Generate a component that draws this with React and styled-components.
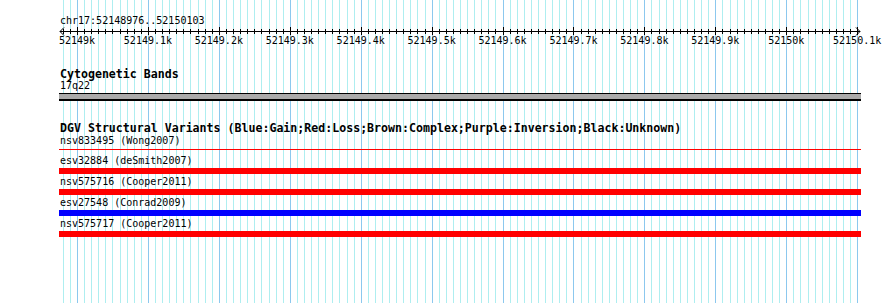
import React from "react";
import styled, { createGlobalStyle } from "styled-components";

const START = 52148976;
const END = 52150103;
const X0 = 60;
const X1 = 860;
const SCALE = (X1 - X0) / (END - START + 1);
const xOf = (bp) => X0 + (bp - START) * SCALE;
const px = (bp) => Math.round(xOf(bp)) + 0.5;

const GlobalStyle = createGlobalStyle`
  html, body {
    margin: 0;
    padding: 0;
    background: #ffffff;
  }
`;

const Page = styled.div`
  position: relative;
  width: 890px;
  height: 303px;
  overflow: hidden;
  background: #ffffff;
  color: #000;
  font-family: "DejaVu Sans Mono", "Liberation Mono", monospace;
`;

const GridLayer = styled.svg`
  position: absolute;
  top: 0;
  left: 0;
  z-index: 0;
`;

const Content = styled.div`
  position: relative;
  z-index: 1;
  display: flex;
  flex-direction: column;
`;

const Coords = styled.div`
  margin: 15px 0 0 60px;
  font-size: 10px;
  line-height: 12px;
  height: 12px;
  white-space: nowrap;
`;

const RulerSvg = styled.svg`
  display: block;
  overflow: visible;
`;

const Track = styled.section`
  display: flex;
  flex-direction: column;
  margin-top: ${(p) => p.$gap}px;
`;

const TrackTitle = styled.div`
  margin-left: 60px;
  font-size: 11.6px;
  font-weight: bold;
  line-height: 12px;
  height: 12px;
  white-space: nowrap;
`;

const Label = styled.div`
  margin-left: 60px;
  font-size: 10px;
  line-height: ${(p) => p.$lh || 13}px;
  height: ${(p) => p.$lh || 13}px;
  white-space: nowrap;
`;

const Band = styled.div`
  margin: 1px 0 0 59px;
  width: 802px;
  height: 5px;
  background: #aaaaaa;
  border-top: 1px solid #000;
  border-bottom: 2px solid #000;
`;

const Row = styled.div`
  display: flex;
  flex-direction: column;
`;

const Slot = styled.div`
  height: ${(p) => (p.$thin ? 7 : 8)}px;
  display: flex;
  flex-direction: column;
`;

const Bar = styled.div`
  margin: ${(p) => (p.$thin ? 2 : 1)}px 0 0 59px;
  width: 802px;
  height: ${(p) => (p.$thin ? 1 : 6)}px;
  background: ${(p) => p.$color};
`;

const variants = [
  { id: "nsv833495", study: "Wong2007", color: "#ff0000", thin: true },
  { id: "esv32884", study: "deSmith2007", color: "#ff0000" },
  { id: "nsv575716", study: "Cooper2011", color: "#ff0000" },
  { id: "esv27548", study: "Conrad2009", color: "#0000ff" },
  { id: "nsv575717", study: "Cooper2011", color: "#ff0000" },
];

const tickLabels = [
  [52149000, "52149k"],
  [52149100, "52149.1k"],
  [52149200, "52149.2k"],
  [52149300, "52149.3k"],
  [52149400, "52149.4k"],
  [52149500, "52149.5k"],
  [52149600, "52149.6k"],
  [52149700, "52149.7k"],
  [52149800, "52149.8k"],
  [52149900, "52149.9k"],
  [52150000, "52150k"],
  [52150100, "52150.1k"],
];

const tens = [];
for (let b = 52148980; b <= 52150100; b += 10) tens.push(b);

const Grid = () => (
  <GridLayer width="890" height="303">
    {tens.map((b) => (
      <line
        key={b}
        x1={px(b)}
        x2={px(b)}
        y1="0"
        y2="303"
        stroke={b % 100 === 0 ? "#8cc8ee" : "#aeeef0"}
        strokeWidth="1"
      />
    ))}
  </GridLayer>
);

const Ruler = () => (
  <RulerSvg width="890" height="20">
    <g stroke="#000" strokeWidth="1" fill="none">
      <line x1={X0} x2={X1} y1="4.5" y2="4.5" />
      <polyline points={`${X0 + 4},0.5 ${X0},4.5 ${X0 + 4},8.5`} />
      <polyline points={`${X1 - 4},0.5 ${X1},4.5 ${X1 - 4},8.5`} />
      {tens.map((b) => (
        <line
          key={b}
          x1={px(b)}
          x2={px(b)}
          y1={b % 100 === 0 ? 0 : 2}
          y2={b % 100 === 0 ? 8 : 7}
        />
      ))}
    </g>
    <g fontFamily="DejaVu Sans Mono, Liberation Mono, monospace" fontSize="10" fill="#000" textAnchor="middle">
      {tickLabels.map(([b, t]) => (
        <text key={b} x={xOf(b)} y="17">
          {t}
        </text>
      ))}
    </g>
  </RulerSvg>
);

export default function App() {
  return (
    <>
      <GlobalStyle />
      <Page>
        <Grid />
        <Content>
          <Coords>chr17:52148976..52150103</Coords>
          <Ruler />
          <Track $gap={21}>
            <TrackTitle>Cytogenetic Bands</TrackTitle>
            <Label $lh={12}>17q22</Label>
            <Band />
          </Track>
          <Track $gap={21}>
            <TrackTitle>
              DGV Structural Variants (Blue:Gain;Red:Loss;Brown:Complex;Purple:Inversion;Black:Unknown)
            </TrackTitle>
            {variants.map((v) => (
              <Row key={v.id}>
                <Label>
                  {v.id} ({v.study})
                </Label>
                <Slot $thin={v.thin}>
                  <Bar $thin={v.thin} $color={v.color} />
                </Slot>
              </Row>
            ))}
          </Track>
        </Content>
      </Page>
    </>
  );
}
